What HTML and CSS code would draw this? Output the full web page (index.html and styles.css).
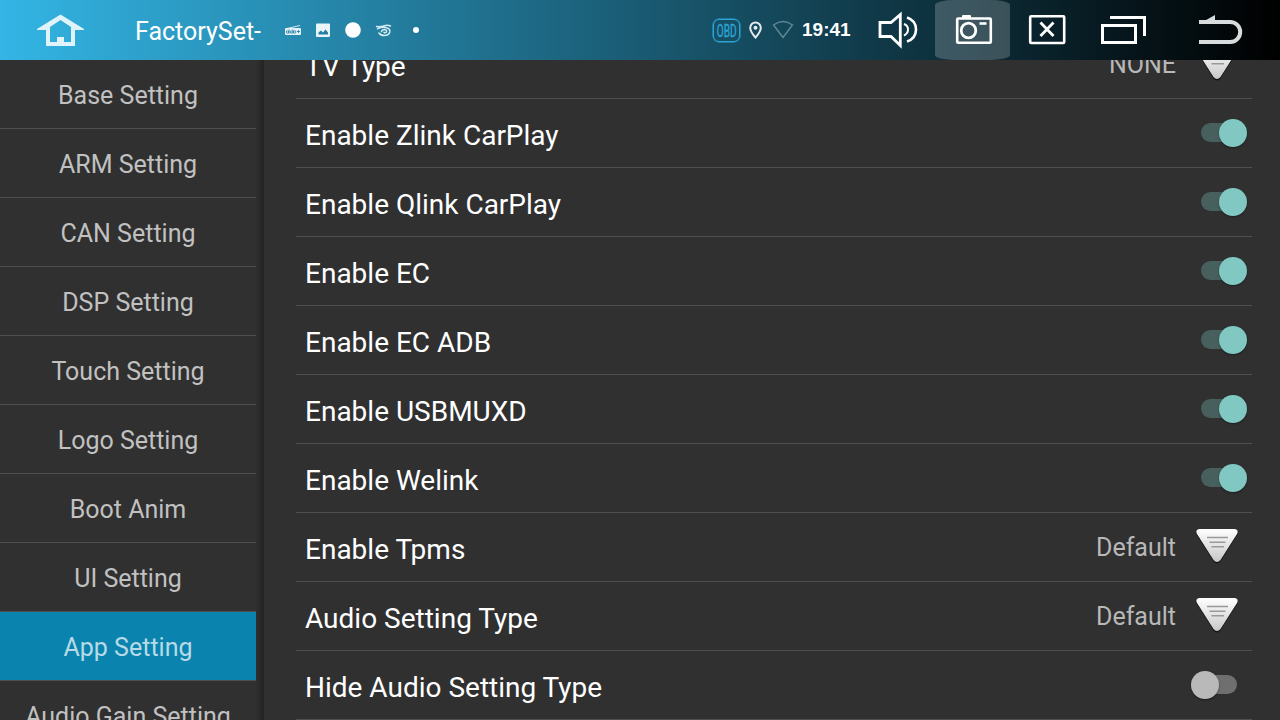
FILE: index.html
```html
<!DOCTYPE html>
<html lang="en">
<head>
	<meta charset="utf-8">
	<title>FactorySet</title>
	<meta name="viewport" content="width=device-width, initial-scale=1.0">
	<link rel="stylesheet" href="styles.css">
</head>

<body>

	<!-- Shared shapes -->
	<svg class="defs" width="0" height="0">
		<defs>
			<linearGradient id="arrowFill" x1="0" y1="0" x2="0" y2="1">
				<stop offset="0" stop-color="#fff"/>
				<stop offset="1" stop-color="#c8c8c8"/>
			</linearGradient>
			<symbol id="arrow" viewBox="0 0 44 38">
				<path d="M4 2.500h36q4 1 2 5L25.500 33.500q-3.500 4-7 0L2 7.500q-2-4 2-5z" fill="#151515"/>
				<path d="M4 1h36q4 1 2 5L25.500 32q-3.500 4-7 0L2 6q-2-4 2-5z" fill="url(#arrowFill)"/>
				<path d="M12 9.500h21M14.500 14.300h16M16.500 18.800h12.500" stroke="#999" stroke-width="1.400"/>
			</symbol>
		</defs>
	</svg>

	<div class="topbar">
		<a class="home">
			<svg width="48" height="34" viewBox="36 12 48 34">
				<path d="M60.500 13.500L84 28v1h-9v16H46V29h-9v-1zM60.500 19L50 26v15h7v-5h7v5h7V26z" fill="#e0f3fb" fill-rule="evenodd"/>
			</svg>
		</a>
		<div class="title">FactorySet-</div>

		<div class="notices">
			<svg width="150" height="30" viewBox="280 15 150 30">
				<!-- radio -->
				<path d="M287 28.500l13-3" stroke="#d5eaf2" stroke-width="1"/>
				<rect x="285" y="28" width="16" height="7" rx="1" fill="#e4f2f7"/>
				<g fill="none" stroke="#2783a8" stroke-width=".9">
					<circle cx="287.500" cy="32" r="1.200"/>
					<circle cx="291.300" cy="32" r="1.200"/>
					<circle cx="294.700" cy="32" r="1.200"/>
					<path d="M289 29.500v4M293 29.500v4M297 31.500h3M298.500 30v3"/>
				</g>
				<!-- picture -->
				<rect x="316" y="23.500" width="14" height="13.500" rx="1" fill="#e9f5f9"/>
				<path d="M318.500 34.500v-2l2.500-2 2 2 2.500-3 2.500 3v2z" fill="#2480a3"/>
				<circle cx="353" cy="30" r="7.800" fill="#fff"/>
				<!-- eye -->
				<g fill="none" stroke="#d5eaf2" stroke-width="1.500" stroke-linecap="round">
					<path d="M376.500 26.500q4 .5 7-.5 4-1.500 7 0M377.500 28.800q4-2 8-1.300 5 1 4.300 4.500-1 3.500-5.300 3.500-4 0-5.500-2.500"/>
					<path d="M381.500 31.500q.5-2 3-2 2.500.5 2 2.300-1 1.500-2.500.5"/>
				</g>
				<circle cx="416" cy="30" r="3" fill="#fff"/>
			</svg>
		</div>

		<div class="status">
			<span class="obd"><span>OBD</span></span>
			<svg class="pin" width="14" height="18" viewBox="0 0 14 18">
				<path d="M7.500 16.500Q2.200 10.500 2.200 6.700a5.300 5.300 0 0 1 10.600 0Q12.800 10.500 7.500 16.500z" fill="none" stroke="#e3eaec" stroke-width="2"/>
				<circle cx="7.500" cy="6.700" r="2" fill="#e3eaec"/>
			</svg>
			<svg class="wifi" width="22" height="20" viewBox="0 0 22 20">
				<path d="M1.500 5Q11-2 20.500 5L11 17.500z" fill="none" stroke="#5f8793" stroke-width="1.500"/>
			</svg>
			<span class="clock">19:41</span>
		</div>

		<div class="buttons">
			<a class="button">
				<svg width="75" height="60" viewBox="860 0 75 60" fill="none" stroke="#fff">
					<path d="M880 22.500h11L900.300 14.500v31L891 36.500H880z" stroke-width="2.800"/>
					<path d="M904 24q4 1.500 4 5.500t-4 6" stroke-width="2"/>
					<path d="M907 17.500q9 3 9 12t-9 12" stroke-width="2.600"/>
				</svg>
			</a>
			<a class="button pressed">
				<svg width="75" height="60" viewBox="935 0 75 60" fill="none" stroke="#fff">
					<rect x="957.200" y="18.500" width="33.600" height="24.200" rx="1" stroke-width="2.600"/>
					<rect x="962" y="15" width="9" height="4" rx="1" fill="#fff" stroke="none"/>
					<circle cx="968.500" cy="30.500" r="7.300" stroke-width="2.800"/>
					<path d="M979.500 23.500h7" stroke-width="2.600"/>
				</svg>
			</a>
			<a class="button">
				<svg width="75" height="60" viewBox="1010 0 75 60" fill="none" stroke="#fff">
					<rect x="1030.200" y="16.200" width="34" height="26.800" rx="1" stroke-width="2.600"/>
					<path d="M1040.500 22.500l13 13.500M1053.500 22.500l-13 13.500" stroke-width="2.800"/>
				</svg>
			</a>
			<a class="button">
				<svg width="75" height="60" viewBox="1085 0 75 60" fill="none" stroke="#fff">
					<rect x="1102.500" y="25.500" width="33" height="17" stroke-width="3"/>
					<path d="M1110 17.500h34.500V36" stroke-width="3"/>
				</svg>
			</a>
			<a class="button back">
				<svg width="120" height="60" viewBox="1160 0 120 60">
					<path d="M1199 42h31.200a9.800 9.800 0 0 0 0-20h-31.200" fill="none" stroke="#d8dcdc" stroke-width="4"/>
					<path d="M1199 24l16-9v9z" fill="#d8dcdc"/>
				</svg>
			</a>
		</div>
	</div>

	<div class="content">
		<ul class="menu">
			<li>Base Setting</li>
			<li>ARM Setting</li>
			<li>CAN Setting</li>
			<li>DSP Setting</li>
			<li>Touch Setting</li>
			<li>Logo Setting</li>
			<li>Boot Anim</li>
			<li>UI Setting</li>
			<li class="active">App Setting</li>
			<li>Audio Gain Setting</li>
		</ul>
		<div class="divider"></div>
		<div class="settings">
			<div class="row">
				<span class="label">TV Type</span>
				<span class="value">NONE</span>
				<svg class="arrow"><use href="#arrow"/></svg>
			</div>
			<div class="row"><span class="label">Enable Zlink CarPlay</span><span class="switch on"></span></div>
			<div class="row"><span class="label">Enable Qlink CarPlay</span><span class="switch on"></span></div>
			<div class="row"><span class="label">Enable EC</span><span class="switch on"></span></div>
			<div class="row"><span class="label">Enable EC ADB</span><span class="switch on"></span></div>
			<div class="row"><span class="label">Enable USBMUXD</span><span class="switch on"></span></div>
			<div class="row"><span class="label">Enable Welink</span><span class="switch on"></span></div>
			<div class="row">
				<span class="label">Enable Tpms</span>
				<span class="value">Default</span>
				<svg class="arrow"><use href="#arrow"/></svg>
			</div>
			<div class="row">
				<span class="label">Audio Setting Type</span>
				<span class="value">Default</span>
				<svg class="arrow"><use href="#arrow"/></svg>
			</div>
			<div class="row"><span class="label">Hide Audio Setting Type</span><span class="switch"></span></div>
		</div>
	</div>

</body>
</html>
```
FILE: styles.css
```css
body {
	margin: 0;
	width: 1280px;
	height: 720px;
	overflow: hidden;
	background: #303030;
	color: #fff;
	font-family: Roboto, sans-serif;
}

.defs {
	display: block;
}

svg {
	flex: none;
}

/* Top bar */
.topbar {
	display: flex;
	align-items: center;
	height: 60px;
	background: linear-gradient(to right, #33b5e5, #000);
}

.home {
	display: flex;
	width: 99px;
	padding-left: 36px;
}

.title {
	width: 145px;
	padding-top: 3px;
	font-size: 25px;
	line-height: 30px;
}

.notices {
	display: flex;
	width: 433px;
}

.status {
	display: flex;
	align-items: center;
	width: 147px;
}

.obd {
	display: flex;
	align-items: center;
	justify-content: center;
	box-sizing: border-box;
	width: 27px;
	height: 23px;
	border: 1px solid #2ca5d6;
	border-radius: 6px;
	box-shadow: 0 0 0 0.5px #2ca5d6;
	color: #2ca5d6;
	font-size: 18px;
}

.obd span {
	transform: scaleX(0.56);
	-webkit-text-stroke: 0.4px #2ca5d6;
}

.pin {
	margin-left: 8px;
}

.wifi {
	margin-left: 10px;
}

.clock {
	margin-left: 8px;
	font-family: "Liberation Sans", sans-serif;
	font-size: 19px;
	font-weight: bold;
	line-height: 24px;
}

.buttons {
	display: flex;
}

.button {
	display: flex;
	width: 75px;
	height: 60px;
}

.back {
	width: 120px;
}

.pressed {
	background: rgba(255, 255, 255, 0.2);
	border-radius: 20px / 5px;
}

/* Content */
.content {
	display: flex;
	height: 660px;
	overflow: hidden;
}

.menu {
	width: 256px;
	margin: 0;
	padding: 0;
	list-style: none;
}

.menu li {
	box-sizing: border-box;
	height: 69px;
	padding-top: 1px;
	border-bottom: 1px solid #4f4f4f;
	color: #c1c1c1;
	font-size: 25px;
	line-height: 70px;
	text-align: center;
}

.menu .active {
	background: #0a84ae;
	background-clip: padding-box;
	color: #b8dae6;
}

.divider {
	width: 8px;
	background: linear-gradient(to right, #303030, #232323);
}

.settings {
	width: 956px;
	margin: -30px 0 0 32px;
}

.row {
	display: flex;
	align-items: center;
	box-sizing: border-box;
	height: 69px;
	padding-left: 9px;
	border-bottom: 1px solid #4f4f4f;
}

.label {
	flex: 1;
	padding-top: 5px;
	font-size: 28px;
}

.value {
	padding-top: 1px;
	color: #b8b8b8;
	font-size: 25px;
}

.arrow {
	width: 44px;
	height: 38px;
	margin: 0 13px 0 19px;
}

/* Switches */
.switch {
	position: relative;
	width: 36px;
	height: 19px;
	margin: 0 15px 2px 0;
	border-radius: 10px;
	background: #6f6f6f;
}

.switch::after {
	content: "";
	position: absolute;
	top: -4px;
	left: -10px;
	width: 28px;
	height: 28px;
	border-radius: 50%;
	background: #b9b9b9;
	box-shadow: 0 1px 2px rgba(0, 0, 0, 0.4);
}

.switch.on {
	background: #48605d;
}

.switch.on::after {
	left: 18px;
	background: #80c8c1;
}
```
